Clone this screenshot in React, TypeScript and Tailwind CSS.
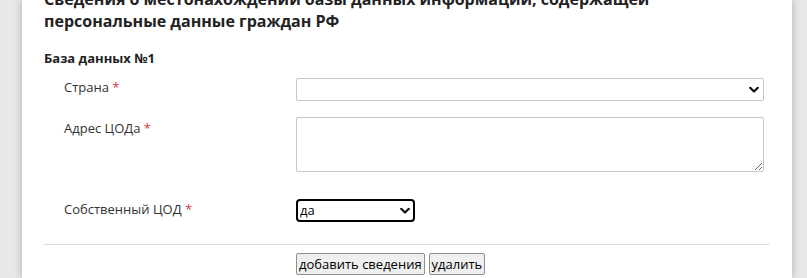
import { useState } from "react"

const font = { fontFamily: '"Open Sans", "Noto Sans", sans-serif' }

function Chevron() {
    return (
        <svg width="10" height="7" viewBox="0 0 10 7" className="pointer-events-none absolute right-[5px] top-1/2 -translate-y-1/2">
            <path d="M1.2 1.3 L5 5 L8.8 1.3" fill="none" stroke="#111" strokeWidth="2.2" strokeLinecap="round" strokeLinejoin="round" />
        </svg>
    )
}

function Label({ text }: { text: string }) {
    return (
        <div className="w-[232px] shrink-0 text-[13px] leading-[20px] text-[#333]">
            {text} <span className="text-[#d9363e]">*</span>
        </div>
    )
}

export default function App() {
    const [own, setOwn] = useState("да")

    return (
        <div className="h-[278px] overflow-hidden bg-[#e8e8e8] pl-[22px] pr-[15px]" style={font}>
            <div className="flow-root h-full bg-white px-[22px] shadow-[0_0_8px_rgba(0,0,0,0.25)]">
                <h2 className="mt-[-12px] text-[16px] font-bold leading-[22px] text-[#222]">
                    Сведения о местонахождении базы данных информации, содержащей
                    <br />
                    персональные данные граждан РФ
                </h2>
                <div className="mt-[17px] text-[13px] font-bold leading-[18px] text-[#222]">База данных №1</div>

                <div className="mt-[10px] flex items-start pl-5">
                    <Label text="Страна" />
                    <div className="relative mt-px w-[468px]">
                        <select className="block h-[23px] w-full appearance-none rounded-[2px] border border-[#c6c6c6] bg-white text-[13px] outline-none" />
                        <Chevron />
                    </div>
                </div>

                <div className="mt-[17px] flex items-start pl-5">
                    <Label text="Адрес ЦОДа" />
                    <textarea className="mt-[-1px] block h-[55px] w-[468px] rounded-[2px] border border-[#c6c6c6] bg-white outline-none" />
                </div>

                <div className="mt-[27px] flex items-start pl-5">
                    <Label text="Собственный ЦОД" />
                    <div className="relative w-[119px]">
                        <select
                            value={own}
                            onChange={e => setOwn(e.target.value)}
                            className="block h-[23px] w-full appearance-none rounded-[4px] border-2 border-black bg-white pl-[2px] text-[13px] leading-[19px] text-black outline-none"
                        >
                            <option value="да">да</option>
                            <option value="нет">нет</option>
                        </select>
                        <Chevron />
                    </div>
                </div>

                <hr className="mt-[22px] border-t border-[#dedede]" />

                <div className="mt-[8px] flex gap-1 pl-[252px]">
                    <button className="h-[22px] rounded-[2px] border border-[#8f8f8f] bg-[#efefef] px-[2px] text-[13px] leading-[18px] text-black">добавить сведения</button>
                    <button className="h-[22px] rounded-[2px] border border-[#8f8f8f] bg-[#efefef] px-[2px] text-[13px] leading-[18px] text-black">удалить</button>
                </div>
            </div>
        </div>
    )
}
